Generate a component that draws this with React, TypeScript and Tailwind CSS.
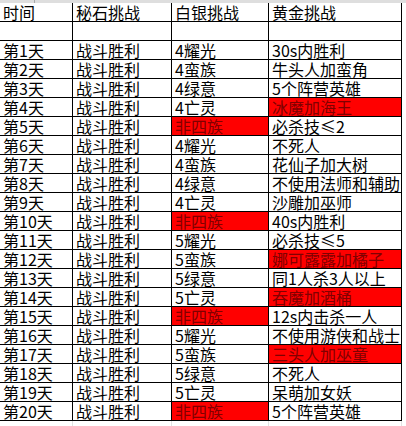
import React from "react";

type Row = {
    day: string;
    stone: string;
    silver: string;
    gold: string;
    silverRed?: boolean;
    goldRed?: boolean;
};

const rows: Row[] = [
    { day: "第1天", stone: "战斗胜利", silver: "4耀光", gold: "30s内胜利" },
    { day: "第2天", stone: "战斗胜利", silver: "4蛮族", gold: "牛头人加蛮角" },
    { day: "第3天", stone: "战斗胜利", silver: "4绿意", gold: "5个阵营英雄" },
    { day: "第4天", stone: "战斗胜利", silver: "4亡灵", gold: "冰魔加海王", goldRed: true },
    { day: "第5天", stone: "战斗胜利", silver: "非四族", gold: "必杀技≤2", silverRed: true },
    { day: "第6天", stone: "战斗胜利", silver: "4耀光", gold: "不死人" },
    { day: "第7天", stone: "战斗胜利", silver: "4蛮族", gold: "花仙子加大树" },
    { day: "第8天", stone: "战斗胜利", silver: "4绿意", gold: "不使用法师和辅助" },
    { day: "第9天", stone: "战斗胜利", silver: "4亡灵", gold: "沙雕加巫师" },
    { day: "第10天", stone: "战斗胜利", silver: "非四族", gold: "40s内胜利", silverRed: true },
    { day: "第11天", stone: "战斗胜利", silver: "5耀光", gold: "必杀技≤5" },
    { day: "第12天", stone: "战斗胜利", silver: "5蛮族", gold: "娜可露露加橘子", goldRed: true },
    { day: "第13天", stone: "战斗胜利", silver: "5绿意", gold: "同1人杀3人以上" },
    { day: "第14天", stone: "战斗胜利", silver: "5亡灵", gold: "吞魔加酒桶", goldRed: true },
    { day: "第15天", stone: "战斗胜利", silver: "非四族", gold: "12s内击杀一人", silverRed: true },
    { day: "第16天", stone: "战斗胜利", silver: "5耀光", gold: "不使用游侠和战士" },
    { day: "第17天", stone: "战斗胜利", silver: "5蛮族", gold: "三头人加巫童", goldRed: true },
    { day: "第18天", stone: "战斗胜利", silver: "5绿意", gold: "不死人" },
    { day: "第19天", stone: "战斗胜利", silver: "5亡灵", gold: "呆萌加女妖" },
    { day: "第20天", stone: "战斗胜利", silver: "非四族", gold: "5个阵营英雄", silverRed: true },
];

const widths = ["w-[73px]", "w-[99px]", "w-[97px]", "w-[133px]"];

function Cell({ w, red, children }: { w: string; red?: boolean; children?: React.ReactNode }) {
    return (
        <div
            className={`${w} h-[19px] shrink-0 border-r border-b border-black pl-[3px] whitespace-nowrap text-[16px] leading-[18px] ${
                red ? "bg-[#ff0000] text-[#800000]" : "text-black"
            }`}
        >
            {children}
        </div>
    );
}

export default function App() {
    return (
        <div
            className="w-[406px] h-[426px] bg-white overflow-hidden"
            style={{ fontFamily: '"Noto Sans CJK SC", "Noto Sans", sans-serif' }}
        >
            <div className="h-[3px] bg-[#dedede] flex">
                <div className="w-[35px] border-r border-[#a8a8a8]" />
            </div>
            <div className="w-[402px]">
                <div className="flex">
                    <Cell w={widths[0]}>时间</Cell>
                    <Cell w={widths[1]}>秘石挑战</Cell>
                    <Cell w={widths[2]}>白银挑战</Cell>
                    <Cell w={widths[3]}>黄金挑战</Cell>
                </div>
                <div className="flex">
                    {widths.map((w) => (
                        <Cell key={w} w={w} />
                    ))}
                </div>
                {rows.map((r) => (
                    <div key={r.day} className="flex">
                        <Cell w={widths[0]}>{r.day}</Cell>
                        <Cell w={widths[1]}>{r.stone}</Cell>
                        <Cell w={widths[2]} red={r.silverRed}>
                            {r.silver}
                        </Cell>
                        <Cell w={widths[3]} red={r.goldRed}>
                            {r.gold}
                        </Cell>
                    </div>
                ))}
                <div className="flex h-[5px]">
                    {widths.map((w) => (
                        <div key={w} className={`${w} border-r border-[#e2e2e2]`} />
                    ))}
                </div>
            </div>
        </div>
    );
}
